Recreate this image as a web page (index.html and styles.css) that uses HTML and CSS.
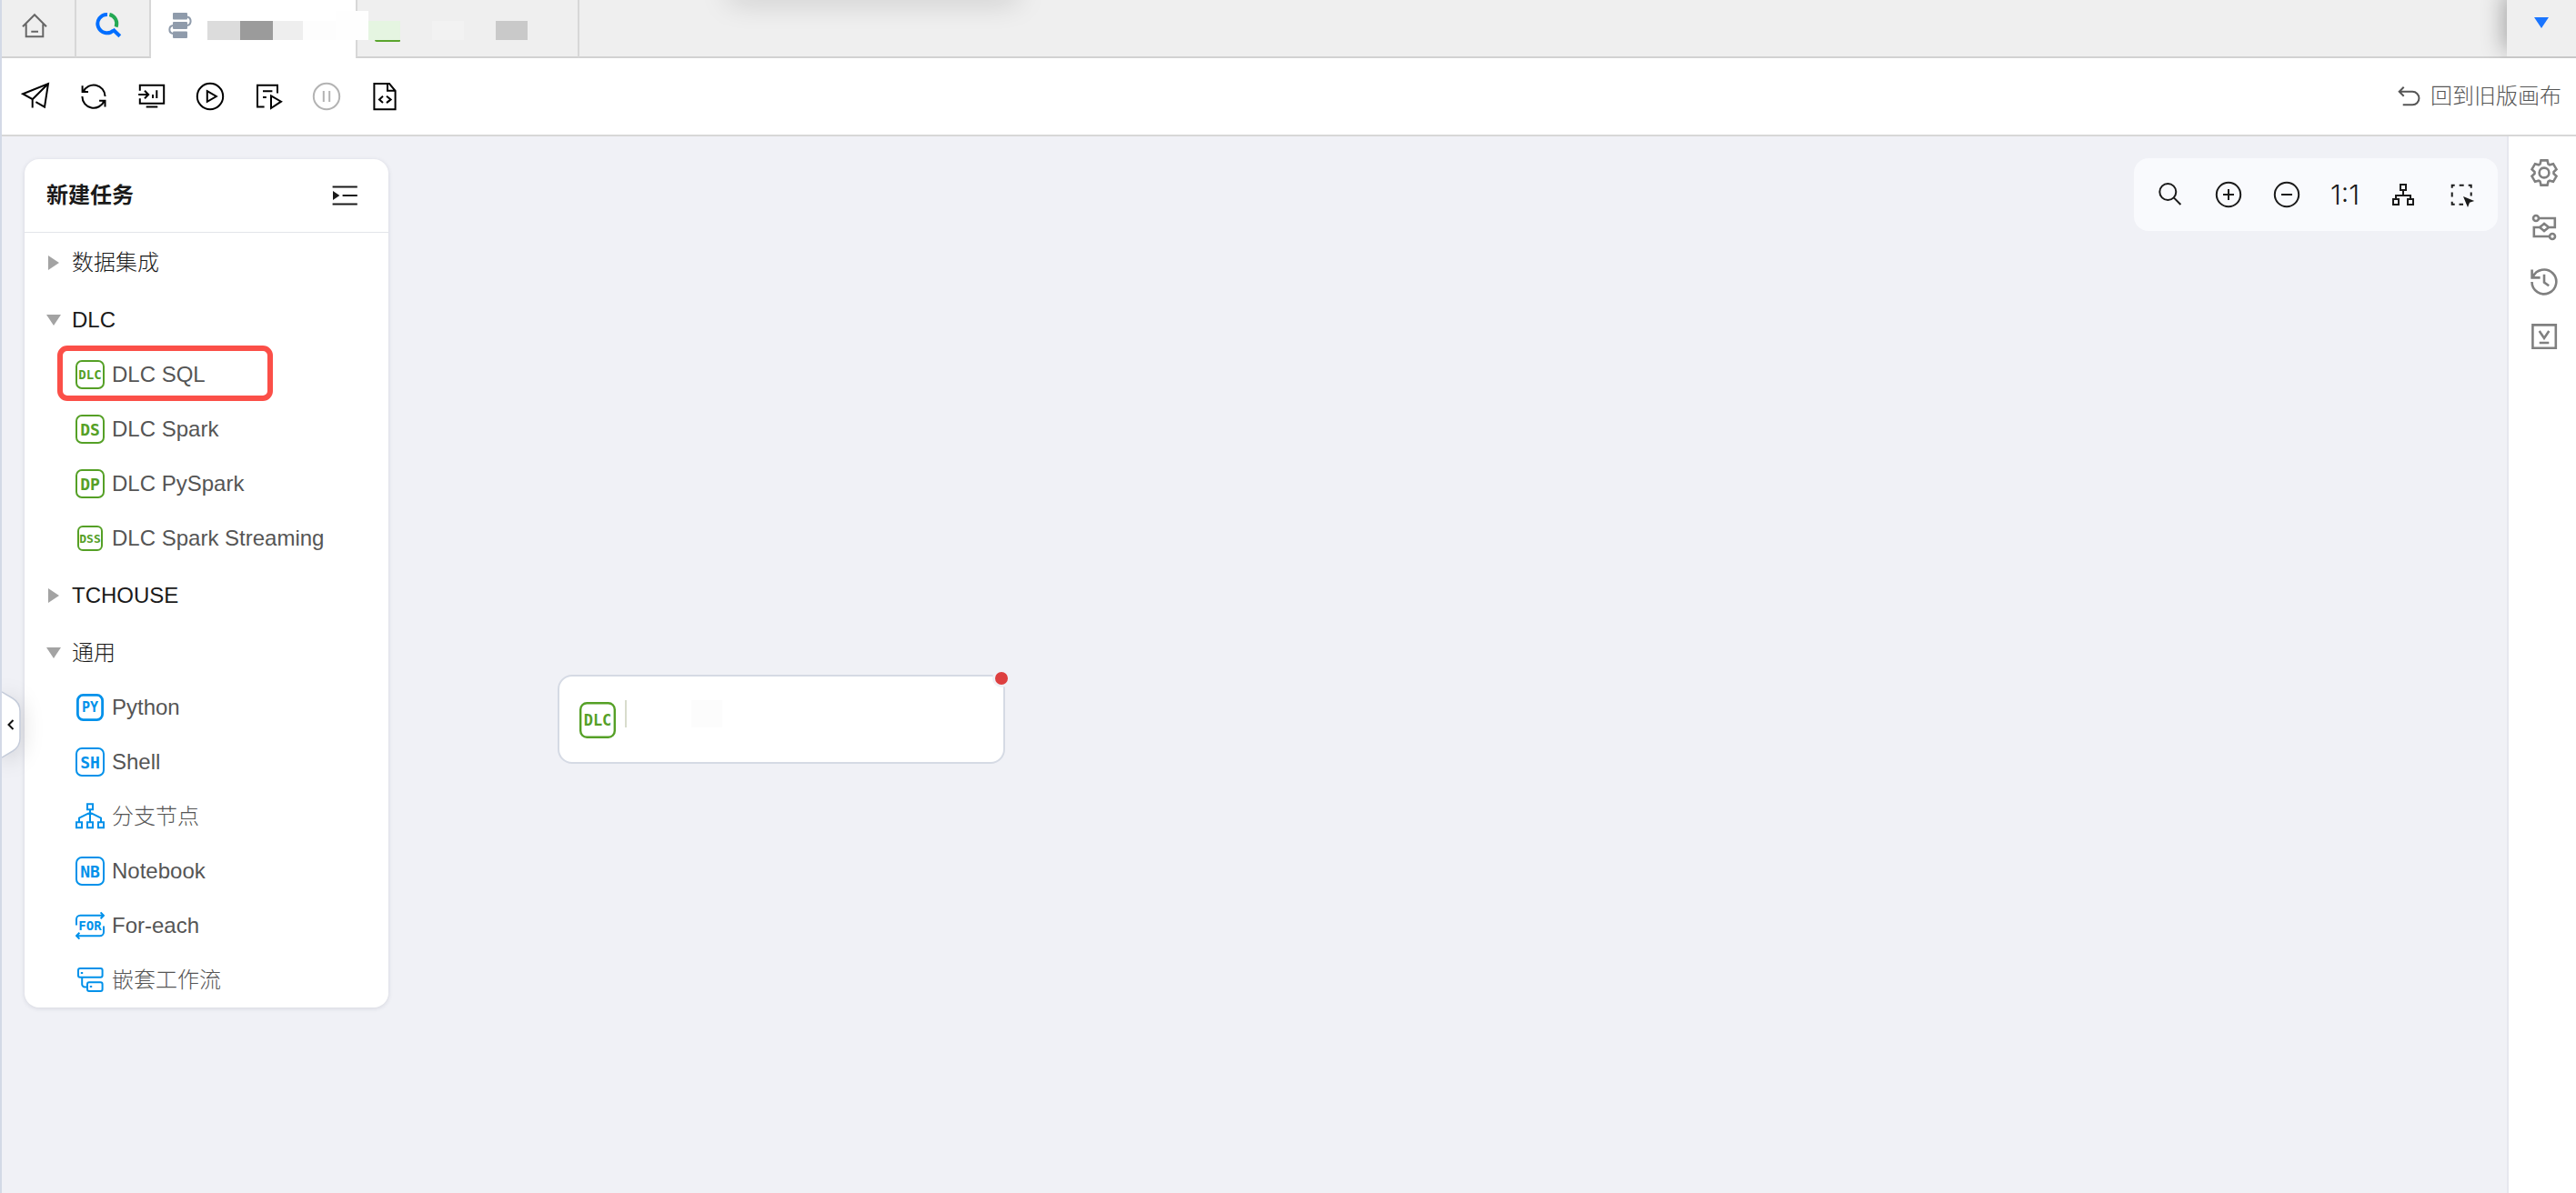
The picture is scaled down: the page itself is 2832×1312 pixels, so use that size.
FILE: index.html
```html
<!DOCTYPE html>
<html lang="zh-CN">
<head>
    <meta charset="UTF-8">
    <meta name="viewport" content="width=device-width, initial-scale=1">
    <title>工作流</title>
    <link rel="stylesheet" href="styles.css">
</head>
<body>
<div class="app">

    <!-- Tabs -->
    <nav class="tabs">
        <button class="tab" aria-label="首页">
            <svg class="icon icon-home" viewBox="0 0 32 32"><path d="M3 17.3 16 4.2l13 13.1M6.7 14.5v13.8h18.6V14.5M12.3 22.8H20"/></svg>
        </button>
        <button class="tab" aria-label="搜索">
            <svg class="icon icon-logo" viewBox="0 0 32 32">
                <path d="M14 3.9a10.2 10.2 0 1 0 6.8 17.4" stroke="#006eff"/>
                <path d="M16.4 4a10.2 10.2 0 0 1 7.2 13.6" stroke="#23a853"/>
                <path d="m20 20.2 7.8 7.6" stroke="#006eff"/>
            </svg>
        </button>
        <div class="tab tab-active">
            <svg class="icon icon-flow" viewBox="0 0 32 32">
                <path d="M24 6.5a5 5 0 0 1 0 9.6M8 16a4.6 4.6 0 0 0 0 9"/>
                <g fill="currentColor" stroke="none"><rect x="8" y="2" width="16" height="7.4" rx="1"/><rect x="8" y="12" width="16" height="8" rx="1"/><rect x="8" y="22.6" width="16" height="7.4" rx="1"/></g>
            </svg>
            <div class="mask">
                <i class="m-light"></i><i class="m-dark"></i><i class="m-soft"></i><i class="m-faint"></i><i class="m-white"></i>
            </div>
        </div>
        <div class="tab tab-file">
            <div class="mask">
                <i class="m-green"></i><i></i><i class="m-pale"></i><i></i><i class="m-grey"></i>
            </div>
        </div>
        <div class="tab-rest"></div>
        <button class="tab-more" aria-label="更多标签">
            <svg width="16" height="12" viewBox="0 0 16 12"><path d="M0 0h16L8 12z" fill="#1a75ff"/></svg>
        </button>
    </nav>

    <!-- Toolbar -->
    <header class="toolbar">
        <button aria-label="提交">
            <svg class="icon" viewBox="0 0 32 32"><path d="M12.7 28.5V19L2.2 13.2 30 2l-4 25.7-9.6-5.6M12.7 19.2 30 2"/></svg>
        </button>
        <button aria-label="刷新">
            <svg class="icon" viewBox="0 0 32 32"><path d="M28.6 16A12.6 12.6 0 0 0 4.5 11M3.6 4.2V11H10M3.4 16a12.6 12.6 0 0 0 24.2 5M28.5 27.6v-6.8h-6.4"/></svg>
        </button>
        <button aria-label="发布">
            <svg class="icon" viewBox="0 0 32 32"><path d="M2.8 9.7v-6h26.4v20H2.8v-5.4M1.2 14H12M8 9.8l4.2 4.2L8 18.2M17 14v4M21.3 9.2V18M9.7 27.4h12.6"/></svg>
        </button>
        <button aria-label="运行">
            <svg class="icon" viewBox="0 0 32 32"><circle cx="16" cy="16" r="14.2"/><path d="m12.8 10.2 10 5.8-10 5.8z"/></svg>
        </button>
        <button aria-label="调试运行">
            <svg class="icon" viewBox="0 0 32 32"><path d="M26 12.4V3.8H4v23.8h7.6M10 10.3h10.4M10 17h3.8M19 15.4l11 6.3-11 7.3z"/></svg>
        </button>
        <button aria-label="暂停" disabled>
            <svg class="icon" viewBox="0 0 32 32"><circle cx="16" cy="16" r="14.2"/><path d="M12.8 10v12M19.2 10v12"/></svg>
        </button>
        <button aria-label="代码">
            <svg class="icon" viewBox="0 0 32 32"><path d="M21 2H4.4v28.2h23.2V9.8zM19 2v7.8h8.6M14 15.7l-4 3.7 4 3.7M18 15.7l4.6 3.7-4.6 3.7"/></svg>
        </button>
        <button class="back">
            <svg class="icon" viewBox="0 0 32 32"><path d="m10.7 5.8-5 5 5 5M6 10.8h14.2a7.2 7.2 0 0 1 0 14.5H9.7"/></svg>
            <span>回到旧版画布</span>
        </button>
    </header>

    <div class="main">
        <main class="canvas">

            <!-- Task list -->
            <section class="panel">
                <div class="panel-head">
                    <h2>新建任务</h2>
                    <button aria-label="收起">
                        <svg class="icon" viewBox="0 0 32 32"><path d="M2.6 6.4h27.2M13.6 16h16.2M2.6 25.4h27.2"/><path d="m3 11 7.4 5L3 21z" fill="currentColor" stroke="none"/></svg>
                    </button>
                </div>
                <ul class="tree">
                    <li><button class="group"><i class="arrow"></i>数据集成</button></li>
                    <li>
                        <button class="group"><i class="arrow open"></i>DLC</button>
                        <ul class="green">
                            <li class="marked"><button class="item">
                                <svg class="icon" viewBox="0 0 32 32"><rect x="1" y="1" width="30" height="30" rx="6"/><text class="t3" x="16" y="21">DLC</text></svg>DLC SQL</button></li>
                            <li><button class="item">
                                <svg class="icon" viewBox="0 0 32 32"><rect x="1" y="1" width="30" height="30" rx="6"/><text class="t2" x="16" y="23">DS</text></svg>DLC Spark</button></li>
                            <li><button class="item">
                                <svg class="icon" viewBox="0 0 32 32"><rect x="1" y="1" width="30" height="30" rx="6"/><text class="t2" x="16" y="23">DP</text></svg>DLC PySpark</button></li>
                            <li><button class="item">
                                <svg class="icon" viewBox="0 0 32 32"><rect x="3" y="3" width="26" height="26" rx="5"/><text class="t3 small" x="16" y="21">DSS</text></svg>DLC Spark Streaming</button></li>
                        </ul>
                    </li>
                    <li><button class="group"><i class="arrow"></i>TCHOUSE</button></li>
                    <li>
                        <button class="group"><i class="arrow open"></i>通用</button>
                        <ul class="blue">
                            <li><button class="item">
                                <svg class="icon" viewBox="0 0 32 32"><rect x="2.4" y="2.4" width="27.2" height="27.2" rx="6" stroke-width="2.8"/><text class="t2 small" x="16" y="21">PY</text></svg>Python</button></li>
                            <li><button class="item">
                                <svg class="icon" viewBox="0 0 32 32"><rect x="1" y="1" width="30" height="30" rx="6"/><text class="t2" x="16" y="23">SH</text></svg>Shell</button></li>
                            <li><button class="item">
                                <svg class="icon" viewBox="0 0 32 32"><path d="M13 2.3h6v6h-6zM1 22.3h6v6H1zM13 22.3h6v6h-6zM25 22.3h6v6h-6zM16 9v13M4 22v-4.5l12-6 12 6V22"/></svg>分支节点</button></li>
                            <li><button class="item">
                                <svg class="icon" viewBox="0 0 32 32"><rect x="1" y="1" width="30" height="30" rx="6"/><text class="t2" x="16" y="23">NB</text></svg>Notebook</button></li>
                            <li><button class="item">
                                <svg class="icon" viewBox="0 0 32 32"><path d="M1 15.6V9a4.2 4.2 0 0 1 4.2-4.2H31M27.6 1.4 31 4.8l-3.4 3.4M31 16.4V23a4.2 4.2 0 0 1-4.2 4.2H1M4.4 23.8 1 27.2l3.4 3.4"/><text class="t3" x="16" y="21">FOR</text></svg>For-each</button></li>
                            <li><button class="item">
                                <svg class="icon" viewBox="0 0 32 32"><rect x="3" y="3" width="26.6" height="9.8" rx="2"/><rect x="13" y="18.2" width="16.6" height="9.8" rx="2"/><path d="M7.2 12.8v7.6a3 3 0 0 0 3 3H13M5.8 8h2.4M15.8 23.1h2.4"/></svg>嵌套工作流</button></li>
                        </ul>
                    </li>
                </ul>
            </section>

            <!-- Zoom tools -->
            <div class="zoombar">
                <button aria-label="查找"><svg class="icon" viewBox="0 0 32 32"><circle cx="13.3" cy="13" r="9"/><path d="m19.8 19.4 7.6 7.6"/></svg></button>
                <button aria-label="放大"><svg class="icon" viewBox="0 0 32 32"><circle cx="16" cy="16" r="13.2"/><path d="M10 16h12M16 10v12"/></svg></button>
                <button aria-label="缩小"><svg class="icon" viewBox="0 0 32 32"><circle cx="16" cy="16" r="13.2"/><path d="M10 16h12"/></svg></button>
                <button class="ratio">1:1</button>
                <button aria-label="自动布局"><svg class="icon" viewBox="0 0 32 32"><path d="M13 5h6v6h-6zM5 21h6v6H5zM21 21h6v6h-6zM16 11v6M8 21v-4h16v4"/></svg></button>
                <button aria-label="框选"><svg class="icon" viewBox="0 0 32 32"><path d="M18 26.7h-4.5M8.7 26.7h-3v-3M5.7 18.5v-5M5.7 8.7v-3h3M13.7 5.7h5M23.7 5.7h3v3M26.7 13.5v4"/><path d="m18 18 12.2 5-5.2 1.8L23 30z" fill="currentColor" stroke="none"/></svg></button>
            </div>

            <!-- Workflow node -->
            <div class="node">
                <svg class="node-icon" viewBox="0 0 40 40"><rect x="1.2" y="1.2" width="37.6" height="37.6" rx="7"/><text x="20" y="26">DLC</text></svg>
                <i class="node-line"></i>
                <i class="node-mask"></i>
                <i class="node-dot"></i>
            </div>

            <button class="handle" aria-label="收起侧栏">
                <svg width="24" height="76" viewBox="0 0 24 76">
                    <path d="M0 2 12 9Q20 14 20 23V53Q20 62 12 67L0 74" fill="#fff" stroke="#c5ccda" stroke-width="1.5"/>
                    <path d="m12.5 33-5 5 5 5" fill="none" stroke="#111" stroke-width="2"/>
                </svg>
            </button>
        </main>

        <!-- Side tools -->
        <aside class="rail">
            <button aria-label="设置"><svg class="icon" viewBox="-16 -16 32 32"><path d="M-4.5-9.5l1-4.1h7l1 4.1L6-8.7l4-1.1 3.5 6-3 2.9v1.8l3 2.9-3.5 6-4-1.1-1.5.8-1 4.1h-7l-1-4.1L-6 8.7l-4 1.1-3.5-6 3-2.9V-.9l-3-2.9 3.5-6 4 1.1z"/><circle r="5.4"/></svg></button>
            <button aria-label="参数"><svg class="icon" viewBox="0 0 32 32"><circle cx="7" cy="6" r="3"/><circle cx="25" cy="26" r="3"/><path d="M10 6h17.8v10h-7M21 16l-5 4-5-4 5-4zM11 16H4.8v10H22"/></svg></button>
            <button aria-label="历史"><svg class="icon" viewBox="0 0 32 32"><path d="M3.6 10.6A13.4 13.4 0 1 1 2.5 16M2.6 2.6v8.8h9M16 7.8v8.8l5.2 3.6"/></svg></button>
            <button aria-label="版本"><svg class="icon" viewBox="0 0 32 32"><path d="M3.4 3.4h25.4v25.4H3.4zM10.7 10 16 18l5.3-8M10.7 23h10.6"/></svg></button>
        </aside>
    </div>

    <div class="top-shadow"></div>
</div>
</body>
</html>
```

FILE: styles.css
```css
*,
*::before,
*::after {
    box-sizing: border-box;
}

body {
    margin: 0;
    font-family: "Liberation Sans", "Noto Sans CJK SC", sans-serif;
    font-size: 24px;
    line-height: 32px;
    color: #1a1a1a;
    background: #fff;
}

button {
    margin: 0;
    padding: 0;
    border: none;
    background: none;
    color: inherit;
    font: inherit;
    cursor: pointer;
}

ul {
    list-style: none;
    margin: 0;
    padding: 0;
}

.icon {
    display: block;
    flex: none;
    width: 32px;
    height: 32px;
    fill: none;
    stroke: currentColor;
    stroke-width: 2;
}

.icon-home {
    color: #666;
}

.icon-logo {
    stroke-width: 4;
}

.icon-flow {
    color: #8f9bab;
}

.app {
    position: relative;
    display: flex;
    flex-direction: column;
    min-height: 100vh;
    border-left: 2px solid #d3d9e6;
    overflow: hidden;
}

/* Tabs */
.tabs {
    display: flex;
    height: 64px;
    background: #efefef;
}

.tab {
    display: flex;
    align-items: flex-start;
    flex: none;
    width: 82px;
    padding: 12px 0 0 20px;
    border-right: 2px solid #d7d7d7;
    border-bottom: 2px solid #d2d2d2;
}

.tab-active {
    position: relative;
    z-index: 1;
    width: 225px;
    padding-left: 16px;
    border: none;
    background: #fff;
}

.tab-file {
    width: 246px;
    padding-left: 12px;
    border-left: 2px solid #d7d7d7;
}

.tab-rest {
    flex: 1;
    border-bottom: 2px solid #d2d2d2;
}

.tab-more {
    display: flex;
    justify-content: center;
    width: 76px;
    padding: 19px 0 0;
    border-bottom: 2px solid #c8c8c8;
    box-shadow: -4px -8px 24px rgba(0, 0, 0, 0.3);
    clip-path: inset(0 0 0 -40px);
    background: #efefef;
}

/* Masked tab titles */
.mask {
    display: flex;
    align-items: flex-end;
    height: 32px;
}

.tab-active .mask {
    margin-left: 14px;
}

.mask i {
    flex: none;
    width: 35px;
    height: 21px;
}

.mask .m-light {
    width: 36px;
    background: #dcdcdc;
}

.mask .m-dark {
    width: 36px;
    background: #9b9b9b;
}

.mask .m-soft {
    width: 33px;
    background: #eee;
}

.mask .m-faint {
    width: 36px;
    background: #fdfdfd;
}

.mask .m-white {
    width: 36px;
    height: 32px;
    background: #fefefe;
}

.mask .m-green {
    position: relative;
    background: #e5f5e1;
}

/* Bottom edge of the tab icon */
.mask .m-green::after {
    content: '';
    position: absolute;
    top: 21px;
    right: 0;
    width: 28px;
    height: 2px;
    border-radius: 0 0 2px 4px;
    background: #5aa52d;
}

.mask .m-pale {
    background: #f2f2f2;
}

.mask .m-grey {
    background: #c9c9c9;
}

/* Toolbar */
.toolbar {
    display: flex;
    align-items: center;
    gap: 32px;
    height: 86px;
    padding: 0 16px 0 21px;
    border-bottom: 2px solid #d7d7d7;
    color: #000;
}

.toolbar button:disabled {
    color: #b3b3b3;
}

.toolbar .back {
    display: flex;
    align-items: center;
    gap: 8px;
    margin-left: auto;
    color: #555;
    font-weight: 300;
}

.main {
    display: flex;
    flex: 1;
}

.canvas {
    position: relative;
    display: flex;
    flex: 1;
    align-items: flex-start;
    justify-content: space-between;
    padding: 24px 10px 24px 25px;
    background: #f0f1f6;
}

/* Task list */
.panel {
    width: 400px;
    margin-top: 1px;
    border-radius: 16px;
    background: #fff;
    box-shadow: 0 1px 5px rgba(40, 50, 80, 0.14);
}

.panel-head {
    display: flex;
    align-items: center;
    justify-content: space-between;
    height: 81px;
    padding: 0 32px 0 24px;
    border-bottom: 1px solid #e3e5ea;
}

.panel-head h2 {
    margin: 0;
    font-size: 24px;
}

.group,
.item {
    display: flex;
    align-items: center;
    width: 100%;
    font-weight: 300;
    text-align: left;
}

.group {
    gap: 12px;
    height: 63px;
    padding: 3px 0 0 24px;
}

.item {
    gap: 8px;
    height: 60px;
    padding-left: 56px;
    color: #555;
}

/* Expand arrow */
.arrow {
    width: 16px;
    height: 16px;
    background: #a3a3a3;
    clip-path: polygon(2px 0, 14px 8px, 2px 16px);
}

.arrow.open {
    clip-path: polygon(0 2px, 16px 2px, 8px 14px);
}

.green .icon {
    color: #55a026;
}

.blue .icon {
    color: #0091ea;
}

.icon text,
.node-icon text {
    fill: currentColor;
    stroke: none;
    font-family: "DejaVu Sans Mono", monospace;
    font-weight: bold;
    text-anchor: middle;
}

.t2 {
    font-size: 18px;
}

.t2.small {
    font-size: 15px;
}

.t3 {
    font-size: 14px;
}

.t3.small {
    font-size: 13px;
}

/* Red highlight round the task */
.marked {
    position: relative;
}

.marked::after {
    content: '';
    position: absolute;
    top: -2px;
    left: 36px;
    width: 237px;
    height: 61px;
    border: 6px solid #fb4f48;
    border-radius: 11px;
    pointer-events: none;
}

/* Zoom tools */
.zoombar {
    display: flex;
    align-items: center;
    gap: 32px;
    height: 80px;
    padding: 0 24px;
    border-radius: 16px;
    background: #f9fafd;
}

.zoombar .ratio {
    display: flex;
    justify-content: center;
    width: 32px;
    font-family: Inter, sans-serif;
    font-size: 30px;
    font-weight: 300;
}

/* Node */
.node {
    position: absolute;
    top: 592px;
    left: 611px;
    display: flex;
    align-items: flex-start;
    width: 492px;
    height: 98px;
    padding: 26px 22px;
    border: 2px solid #d5dae4;
    border-radius: 16px;
    background: #fff;
}

.node-icon {
    width: 40px;
    height: 40px;
    margin-top: 2px;
    fill: none;
    stroke: currentColor;
    stroke-width: 2.4;
    color: #55a026;
}

.node-icon text {
    font-size: 17px;
}

.node-line {
    width: 2px;
    height: 30px;
    margin-left: 10px;
    background: #d8dccc;
}

.node-mask {
    width: 34px;
    height: 30px;
    margin-left: 71px;
    background: #fcfcfc;
}

.node-dot {
    position: absolute;
    top: -8px;
    right: -8px;
    width: 20px;
    height: 20px;
    border: 3px solid #f0f1f6;
    border-radius: 50%;
    background: #dd3f3f;
}

/* Collapse handle */
.handle {
    position: absolute;
    top: 609px;
    left: 0;
    width: 24px;
    height: 76px;
    filter: drop-shadow(0 4px 12px rgba(0, 0, 0, 0.16));
}

.handle svg {
    display: block;
}

/* Side tools */
.rail {
    display: flex;
    flex-direction: column;
    align-items: flex-start;
    gap: 28px;
    width: 76px;
    padding: 24px 0 0 23px;
    border-left: 2px solid #e6e7ef;
    color: #808080;
}

.rail .icon {
    stroke-width: 2.6;
}

/* Shadow of the bar above the page */
.top-shadow {
    position: absolute;
    top: -20px;
    left: 798px;
    width: 320px;
    height: 16px;
    border-radius: 8px;
    box-shadow: 0 4px 32px rgba(0, 0, 0, 0.22);
}
```
